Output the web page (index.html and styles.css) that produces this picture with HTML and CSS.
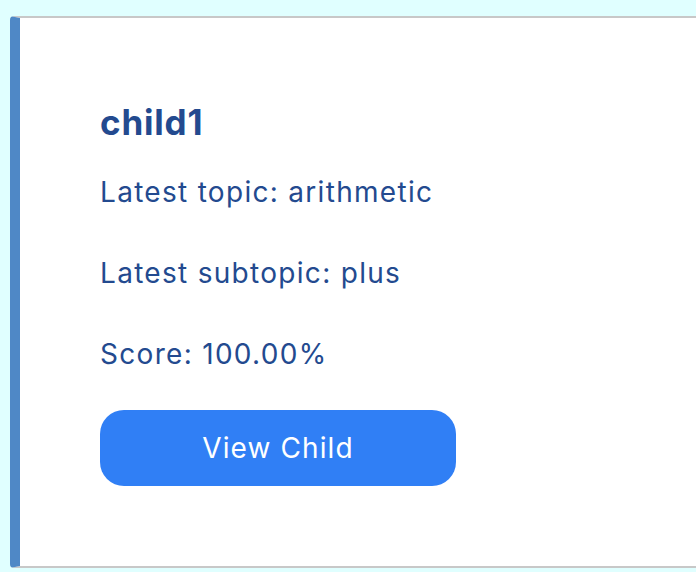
FILE: index.html
```html
<!DOCTYPE html>
<html>
<head>
<meta charset="utf-8">
<link rel="stylesheet" href="styles.css">
</head>
<body>
<div class="card">
  <h2 class="name">child1</h2>
  <p class="info">Latest topic: arithmetic</p>
  <p class="info">Latest subtopic: plus</p>
  <p class="info">Score: 100.00%</p>
  <button class="view-btn">View Child</button>
</div>
</body>
</html>
```
FILE: styles.css
```css
html, body {
  margin: 0;
  padding: 0;
  background: #e0ffff;
  font-family: Inter, "Noto Sans", sans-serif;
}
body {
  padding: 16px 0 0 10px;
  height: 572px;
  box-sizing: border-box;
  overflow: hidden;
}
.card {
  width: 720px;
  height: 552px;
  box-sizing: border-box;
  background: #fff;
  border-top: 2px solid #c8c8c8;
  border-bottom: 2px solid #c8c8c8;
  border-left: 10px solid #4f88c6;
  border-radius: 4px 0 0 4px;
  padding: 83px 0 0 80px;
  display: flex;
  flex-direction: column;
  align-items: flex-start;
}
.name {
  margin: 0;
  font-size: 35px;
  line-height: 42px;
  font-weight: 700;
  letter-spacing: 0.8px;
  color: #234a8f;
}
.info {
  margin: 32px 0 0;
  font-size: 28px;
  line-height: 34px;
  letter-spacing: 1.3px;
  color: #234a8f;
}
.info + .info {
  margin-top: 47px;
}
.view-btn {
  margin-top: 39px;
  width: 356px;
  height: 76px;
  border: none;
  border-radius: 24px;
  background: #307ff5;
  color: #fff;
  font-family: Inter, "Noto Sans", sans-serif;
  font-size: 28px;
  letter-spacing: 1.1px;
  padding: 0;
}
```
